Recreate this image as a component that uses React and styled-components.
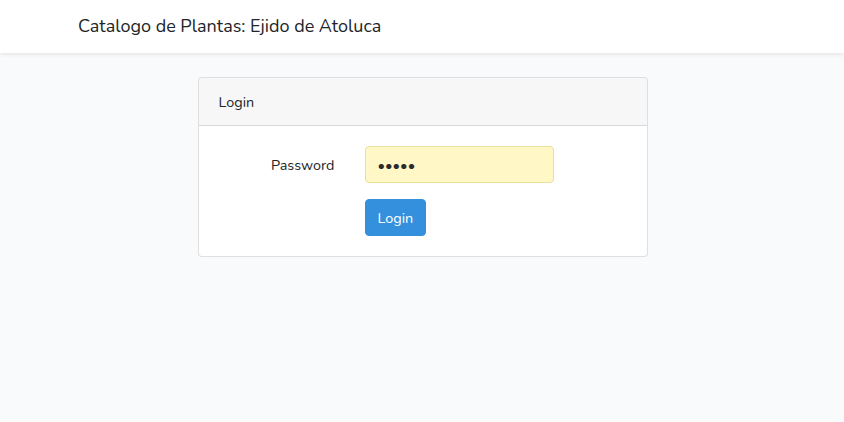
import React from 'react';
import styled, { createGlobalStyle } from 'styled-components';

const GlobalStyle = createGlobalStyle`
    body {
        margin: 0;
        background: #f8fafc;
        color: #212529;
        font-family: "Nunito", "Noto Sans", sans-serif;
        font-size: 14.4px;
        line-height: 1.6;
    }
    * { box-sizing: border-box; }
`

const NavbarStyle = styled.nav`
    background: #fff;
    height: 53px;
    box-shadow: 0 2px 4px rgba(0, 0, 0, 0.075);
    display: flex;
    align-items: center;
`

const ContainerStyle = styled.div`
    width: 720px;
    margin: 0 auto;
    padding: 0 15px;
`

const BrandStyle = styled.a`
    font-size: 18px;
    color: #212529;
    text-decoration: none;
    padding-left: 1px;
`

const MainStyle = styled.main`
    padding: 24px 0 0 1px;
`

const CardStyle = styled.div`
    width: 450px;
    margin: 0 auto;
    background: #fff;
    border: 1px solid rgba(0, 0, 0, 0.125);
    border-radius: 4px;
`

const CardHeaderStyle = styled.div`
    padding: 13px 20px 11px;
    background: rgba(0, 0, 0, 0.03);
    border-bottom: 1px solid rgba(0, 0, 0, 0.125);
    border-radius: 3px 3px 0 0;
`

const CardBodyStyle = styled.form`
    padding: 20px;
    display: grid;
    grid-template-columns: 116px 189px;
    column-gap: 30px;
    row-gap: 16px;
    align-items: center;
`

const LabelStyle = styled.label`
    text-align: right;
    padding-top: 2px;
`

const InputStyle = styled.input`
    height: 37px;
    width: 100%;
    padding: 5px 12px;
    font-size: 14.4px;
    font-family: inherit;
    color: #2b2b2b;
    background: #fff7c5;
    border: 1px solid #e9df9f;
    border-radius: 4px;
    outline: none;
`

const ButtonStyle = styled.button`
    grid-column: 2;
    justify-self: start;
    height: 37px;
    padding: 5px 12px;
    font-size: 14.4px;
    font-family: inherit;
    color: #fff;
    background: #3490dc;
    border: 1px solid #3490dc;
    border-radius: 4px;
`

const App = () => (
    <>
        <GlobalStyle />
        <NavbarStyle>
            <ContainerStyle>
                <BrandStyle href="#">Catalogo de Plantas: Ejido de Atoluca</BrandStyle>
            </ContainerStyle>
        </NavbarStyle>
        <MainStyle>
            <CardStyle>
                <CardHeaderStyle>Login</CardHeaderStyle>
                <CardBodyStyle onSubmit={e => e.preventDefault()}>
                    <LabelStyle htmlFor="password">Password</LabelStyle>
                    <InputStyle id="password" type="password" defaultValue="12345" />
                    <ButtonStyle type="submit">Login</ButtonStyle>
                </CardBodyStyle>
            </CardStyle>
        </MainStyle>
    </>
);

export default App;
